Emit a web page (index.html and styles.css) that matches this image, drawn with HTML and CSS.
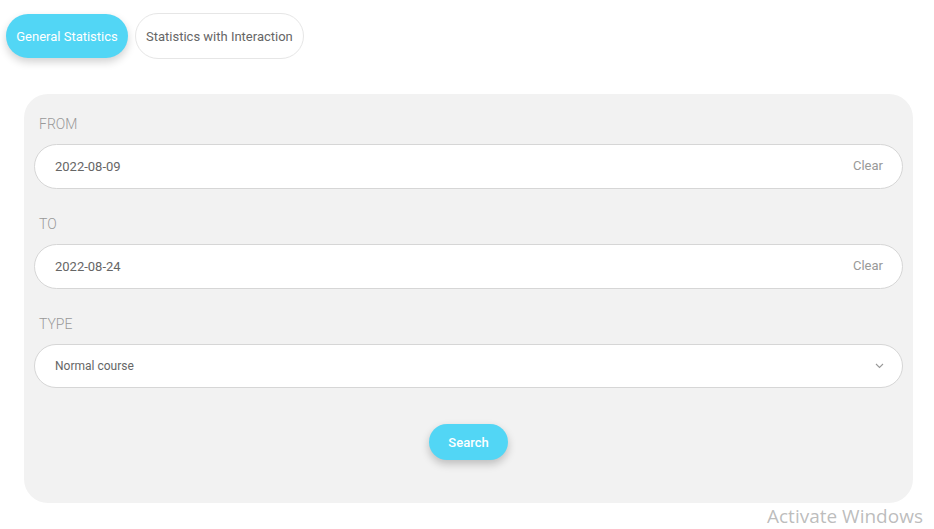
FILE: index.html
```html
<!DOCTYPE html>
<html>
<head>
<meta charset="utf-8">
<link rel="stylesheet" href="styles.css">
</head>
<body>
<div class="page">
  <div class="tabs">
    <button class="tab tab-active">General Statistics</button>
    <button class="tab">Statistics with Interaction</button>
  </div>
  <div class="panel">
    <div class="field">
      <div class="label">FROM</div>
      <div class="input"><span class="value">2022-08-09</span><span class="clear">Clear</span></div>
    </div>
    <div class="field">
      <div class="label">TO</div>
      <div class="input"><span class="value">2022-08-24</span><span class="clear">Clear</span></div>
    </div>
    <div class="field">
      <div class="label">TYPE</div>
      <div class="input select"><span class="value small">Normal course</span>
        <svg class="chevron" width="9" height="6" viewBox="0 0 9 6"><path d="M1 1l3.5 3.5L8 1" fill="none" stroke="#999" stroke-width="1.1"/></svg>
      </div>
    </div>
    <div class="actions">
      <button class="search">Search</button>
    </div>
  </div>
  <div class="watermark">Activate Windows</div>
</div>
</body>
</html>
```
FILE: styles.css
```css
html, body {
  margin: 0;
  padding: 0;
  background: #ffffff;
  font-family: Roboto, "Liberation Sans", sans-serif;
}
.page {
  width: 934px;
  height: 529px;
  position: relative;
  overflow: hidden;
}
.tabs {
  display: flex;
  align-items: center;
  gap: 7px;
  padding: 13px 6px 0 6px;
  height: 46px;
}
.tab {
  font-family: Roboto, "Liberation Sans", sans-serif;
  font-size: 13px;
  height: 46px;
  border-radius: 23px;
  border: 1px solid #e6e6e6;
  background: #fff;
  color: #666;
  padding: 0 10px;
  cursor: pointer;
}
.tab-active {
  height: 44px;
  border: none;
  background: #52d6f5;
  color: #fff;
  width: 122px;
  padding: 0;
  box-shadow: 0 4px 8px rgba(0, 0, 0, 0.18);
}
.panel {
  margin: 35px 21px 0 24px;
  background: #f2f2f2;
  border-radius: 24px;
  padding: 20px 10px 43px 10px;
}
.field + .field {
  margin-top: 25px;
}
.label {
  font-size: 14px;
  line-height: 20px;
  font-weight: 300;
  color: #999;
  padding-left: 5px;
  margin-bottom: 10px;
}
.input {
  height: 45px;
  box-sizing: border-box;
  background: #fff;
  border: 1px solid #d6d6d6;
  border-radius: 23px;
  display: flex;
  align-items: center;
  justify-content: space-between;
  padding: 0 19px 0 20px;
}
.value {
  font-size: 13px;
  color: #666;
}
.value.small {
  font-size: 12px;
}
.clear {
  font-size: 13px;
  color: #999;
  margin-top: -3px;
}
.select {
  height: 44px;
  padding-right: 18px;
}
.chevron {
  display: block;
}
.actions {
  display: flex;
  justify-content: center;
  margin-top: 36px;
}
.search {
  font-family: Roboto, "Liberation Sans", sans-serif;
  font-size: 13px;
  font-weight: 500;
  color: #fff;
  background: #52d6f5;
  border: none;
  border-radius: 18px;
  width: 79px;
  height: 36px;
  box-shadow: 0 4px 8px rgba(0, 0, 0, 0.22);
}
.watermark {
  position: absolute;
  left: 767px;
  top: 503px;
  font-family: "Open Sans", "DejaVu Sans", sans-serif;
  font-size: 19px;
  color: rgba(160, 160, 160, 0.7);
}
```
